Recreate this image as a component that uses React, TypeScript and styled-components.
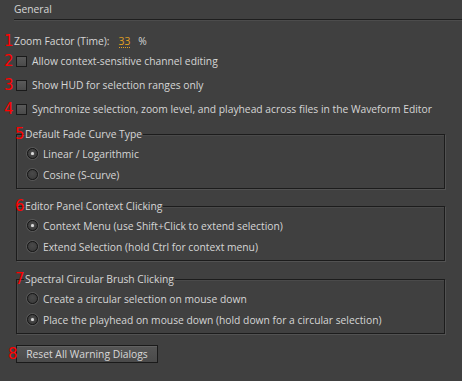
import React from 'react';
import styled, { createGlobalStyle } from 'styled-components';

const GlobalStyle = createGlobalStyle`
  html, body {
    margin: 0;
    padding: 0;
    background: #404040;
  }
  body {
    font-family: "Open Sans", "DejaVu Sans", sans-serif;
    font-size: 10.3px;
    color: #d6d6d6;
  }
`;

const Page = styled.div`
  width: 462px;
  height: 381px;
  box-sizing: border-box;
  padding: 0 0 0 14px;
  background: #404040;
  overflow: hidden;
`;

const Header = styled.div`
  height: 17px;
  line-height: 14px;
  padding-top: 2px;
  box-sizing: content-box;
  border-bottom: 1px solid #1e1e1e;
  box-shadow: 0 1px 0 #4c4c4c;
`;

const Marked = styled.div`
  position: relative;
`;

const Mark = styled.span<{ $left?: number; $top?: number }>`
  position: absolute;
  left: ${p => p.$left ?? -10}px;
  top: ${p => p.$top ?? -2}px;
  color: #ff0000;
  font-family: "DejaVu Sans", sans-serif;
  font-size: 15px;
  line-height: 18px;
  pointer-events: none;
`;

const Row = styled.div<{ $mt?: number }>`
  display: flex;
  align-items: center;
  gap: 5px;
  height: 14px;
  margin-top: ${p => p.$mt ?? 10}px;
`;

const ZoomValue = styled.span`
  color: #e0a020;
  border-bottom: 1px dotted #e0a020;
  line-height: 12px;
  margin-left: 4px;
  margin-right: 3px;
`;

const Check = styled.span`
  width: 9px;
  height: 9px;
  margin-left: 2px;
  border: 1px solid #1a1a1a;
  background: linear-gradient(#5a5a5a, #4a4a4a);
  flex: none;
`;

const Group = styled.fieldset<{ $mt: number }>`
  margin: ${p => p.$mt}px 0 0 2px;
  width: 429px;
  box-sizing: border-box;
  border: 1px solid #1c1c1c;
  box-shadow: 1px 1px 0 #525252, inset 1px 1px 0 #4a4a4a;
  padding: 7px 0 7px 10px;
  display: flex;
  flex-direction: column;
  gap: 8px;
`;

const Legend = styled.legend`
  padding: 0 1px;
  margin-left: -3px;
  line-height: 12px;
`;

const Option = styled.label`
  display: flex;
  align-items: center;
  gap: 5px;
  height: 13px;
`;

const Radio = styled.span<{ $on?: boolean }>`
  position: relative;
  width: 9px;
  height: 9px;
  border-radius: 50%;
  border: 1px solid #161616;
  background: radial-gradient(circle at 50% 40%, #4a4a4a, #383838);
  box-shadow: 0 0 0 1px #575757;
  flex: none;
  &::after {
    content: '';
    display: ${p => (p.$on ? 'block' : 'none')};
    position: absolute;
    left: 3px;
    top: 3px;
    width: 3px;
    height: 3px;
    border-radius: 50%;
    background: #dcdcdc;
    box-shadow: 0 0 1px #a0a0a0;
  }
`;

const Button = styled.button`
  margin: 11px 0 0 2px;
  height: 18px;
  width: 142px;
  border: 1px solid #1a1a1a;
  background: linear-gradient(#555555, #4a4a4a);
  box-shadow: inset 0 1px 0 #616161;
  color: #d8d8d8;
  font-family: inherit;
  font-size: 10.3px;
  padding: 0;
  line-height: 14px;
`;

type GroupDef = { n: number; title: string; options: string[]; selected: number; mt: number };

const groups: GroupDef[] = [
  { n: 5, title: 'Default Fade Curve Type', options: ['Linear / Logarithmic', 'Cosine (S-curve)'], selected: 0, mt: 12 },
  {
    n: 6,
    title: 'Editor Panel Context Clicking',
    options: ['Context Menu (use Shift+Click to extend selection)', 'Extend Selection (hold Ctrl for context menu)'],
    selected: 0,
    mt: 11,
  },
  {
    n: 7,
    title: 'Spectral Circular Brush Clicking',
    options: ['Create a circular selection on mouse down', 'Place the playhead on mouse down (hold down for a circular selection)'],
    selected: 1,
    mt: 12,
  },
];

const checks = [
  'Allow context-sensitive channel editing',
  'Show HUD for selection ranges only',
  'Synchronize selection, zoom level, and playhead across files in the Waveform Editor',
];

export default function App() {
  return (
    <>
      <GlobalStyle />
      <Page>
        <Header>General</Header>
        <Marked>
          <Mark>1</Mark>
          <Row $mt={14}>
            Zoom Factor (Time):<ZoomValue>33</ZoomValue>%
          </Row>
        </Marked>
        {checks.map((c, i) => (
          <Marked key={c}>
            <Mark>{i + 2}</Mark>
            <Row $mt={i === 0 ? 6 : 10}>
              <Check />
              {c}
            </Row>
          </Marked>
        ))}
        {groups.map(g => (
          <Marked key={g.n}>
            <Mark $left={1} $top={-3}>{g.n}</Mark>
            <Group $mt={g.mt}>
              <Legend>{g.title}</Legend>
              {g.options.map((o, i) => (
                <Option key={o}>
                  <Radio $on={i === g.selected} />
                  {o}
                </Option>
              ))}
            </Group>
          </Marked>
        ))}
        <Marked>
          <Mark $left={-6} $top={11}>8</Mark>
          <Button>Reset All Warning Dialogs</Button>
        </Marked>
      </Page>
    </>
  );
}
